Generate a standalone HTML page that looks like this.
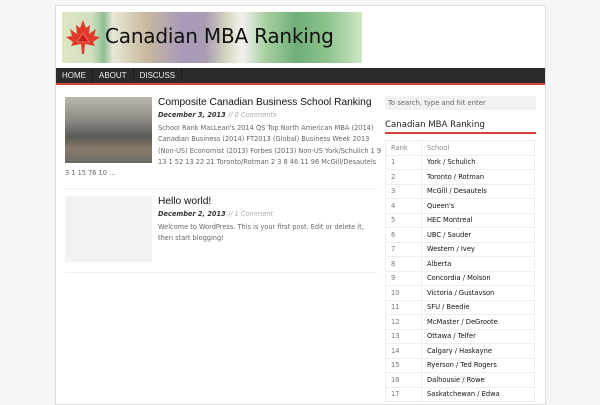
<!DOCTYPE html>
<html><head><meta charset="utf-8"><style>
*{margin:0;padding:0;box-sizing:border-box}
body{width:600px;height:400px;overflow:hidden;background:#f5f5f5;font-family:"DejaVu Sans","Liberation Sans",sans-serif;position:relative}
#wrap{position:absolute;left:55px;top:5px;width:491px;height:400px;background:#fff;border:1px solid #ddd}
.banner{position:absolute;left:6px;top:6px;width:300px;height:51px;overflow:hidden;
background:linear-gradient(90deg,#dfe6c4 0%,#cfe0c0 10%,#8fbf95 14%,#e8e6d6 17%,#c9b9a0 28%,#a89ab8 40%,#a99db4 48%,#d8d6c0 55%,#f2f2ee 60%,#a8cfa0 68%,#6fae78 78%,#8cc28c 88%,#cfe6c4 100%)}
.banner .t{position:absolute;left:43px;top:12px;font-family:"DejaVu Sans",sans-serif;font-size:20px;color:#111;letter-spacing:-0.2px;white-space:nowrap}
.nav{position:absolute;left:0;top:62px;width:489px;height:17px;background:#2b2b2b;border-bottom:2px solid #d9423b}
.nav span{float:left;color:#eee;font-size:8px;line-height:15px;padding:0 6px;border-right:1px solid #1a1a1a;font-family:"Liberation Sans",sans-serif}
.post{position:absolute;left:9px;width:312px}
.thumb{position:absolute;left:0;top:0;width:87px;height:66px}
.title{position:absolute;left:93px;font-family:"Liberation Sans",sans-serif;font-size:10.2px;color:#111;white-space:nowrap}
.meta{position:absolute;left:93px;font-size:6.6px;color:#333;font-style:italic;font-weight:bold;white-space:nowrap}
.meta i{color:#aaa;font-weight:normal}
.ex{position:absolute;font-size:6.6px;color:#666;line-height:11.3px}
.side{position:absolute;left:329px;top:90px;width:151px}
.search{height:14px;background:#f2f2f2;font-size:6.8px;color:#666;line-height:14px;padding-left:3px}
.wt{margin-top:10px;font-size:8.6px;color:#222;padding-bottom:2px;border-bottom:2px solid #d9423b}
table{margin-top:6px;width:150px;border-collapse:collapse;font-size:6.7px}
td{border:1px solid #eee;height:14.5px;padding-left:5px;color:#111}
td:first-child{width:36px;color:#777}
tr:first-child td{color:#888}
</style></head><body>
<div id="wrap">
<div class="banner">
<svg style="position:absolute;left:2px;top:6px" width="38" height="38" viewBox="0 0 38 38"><path d="M19 2 L22 10 L26 7 L25 16 L32 11 L30 18 L36 19 L29 24 L31 28 L21 26 L20 36 L18 36 L17 26 L7 28 L9 24 L2 19 L8 18 L6 11 L13 16 L12 7 L16 10 Z" fill="#e23a2a"/><path d="M13 24 L19 15 L25 24 Z" fill="#c8201a" stroke="#f4a090" stroke-width="0.6"/></svg>
<div class="t">Canadian MBA Ranking</div>
</div>
<div class="nav"><span>HOME</span><span>ABOUT</span><span>DISCUSS</span></div>

<div class="post" style="top:91px">
<div class="thumb" style="background:linear-gradient(180deg,#bdb7ab 0%,#8d8a84 35%,#5c5a55 60%,#8a7a6a 80%,#6a6a66 100%)"></div>
<div class="title" style="top:0">Composite Canadian Business School Ranking</div>
<div class="meta" style="top:14px">December 3, 2013 <i>// 0 Comments</i></div>
<div class="ex" style="left:93px;top:26px;width:226px">School Rank MacLean's 2014 QS Top North American MBA (2014) Canadian Business (2014) FT2013 (Global) Business Week 2013 (Non-US) Economist (2013) Forbes (2013) Non-US York/Schulich 1 9 13 1 52 13 22 21 Toronto/Rotman 2 3 8 46 11 96 McGill/Desautels</div>
<div class="ex" style="left:0;top:71px">3 1 15 76 10 …</div>
</div>
<div style="position:absolute;left:9px;top:182px;width:312px;border-top:1px solid #eee"></div>
<div class="post" style="top:190px">
<div class="thumb" style="background:#f2f2f2"></div>
<div class="title" style="top:0">Hello world!</div>
<div class="meta" style="top:14px">December 2, 2013 <i>// 1 Comment</i></div>
<div class="ex" style="left:93px;top:26px;width:221px">Welcome to WordPress. This is your first post. Edit or delete it, then start blogging!</div>
</div>
<div style="position:absolute;left:9px;top:266px;width:312px;border-top:1px solid #eee"></div>

<div class="side">
<div class="search">To search, type and hit enter</div>
<div class="wt">Canadian MBA Ranking</div>
<table>
<tr><td>Rank</td><td>School</td></tr>
<tr><td>1</td><td>York / Schulich</td></tr>
<tr><td>2</td><td>Toronto / Rotman</td></tr>
<tr><td>3</td><td>McGill / Desautels</td></tr>
<tr><td>4</td><td>Queen's</td></tr>
<tr><td>5</td><td>HEC Montreal</td></tr>
<tr><td>6</td><td>UBC / Sauder</td></tr>
<tr><td>7</td><td>Western / Ivey</td></tr>
<tr><td>8</td><td>Alberta</td></tr>
<tr><td>9</td><td>Concordia / Molson</td></tr>
<tr><td>10</td><td>Victoria / Gustavson</td></tr>
<tr><td>11</td><td>SFU / Beedie</td></tr>
<tr><td>12</td><td>McMaster / DeGroote</td></tr>
<tr><td>13</td><td>Ottawa / Telfer</td></tr>
<tr><td>14</td><td>Calgary / Haskayne</td></tr>
<tr><td>15</td><td>Ryerson / Ted Rogers</td></tr>
<tr><td>16</td><td>Dalhousie / Rowe</td></tr>
<tr><td>17</td><td>Saskatchewan / Edwa</td></tr>
</table>
</div>
</div>
</body></html>
